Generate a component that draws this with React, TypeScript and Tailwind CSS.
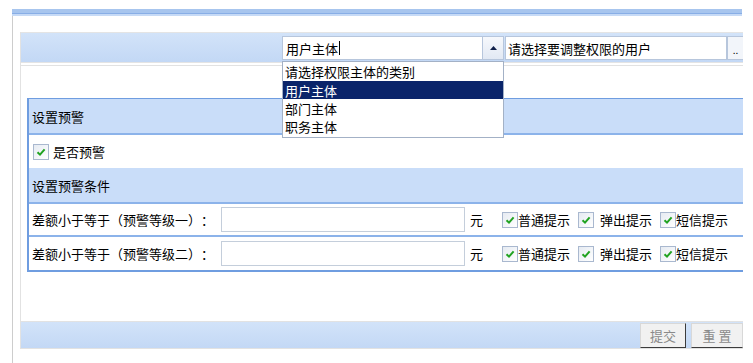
import React from 'react';

const Check: React.FC = () => (
  <span className="inline-flex h-[16px] w-[16px] shrink-0 items-center justify-center border border-[#a9b8cf] bg-gradient-to-br from-[#e6ebf2] to-white">
    <svg width="10" height="10" viewBox="0 0 10 10">
      <path d="M1.5 5.2 L4 7.6 L8.6 2.4" fill="none" stroke="#21a321" strokeWidth="2" />
    </svg>
  </span>
);

const SectionHead: React.FC<{ title: string }> = ({ title }) => (
  <div className="flex h-[36px] items-center border-b-2 border-[#8cb3ea] bg-[#c9ddf9] pl-[3px]">
    {title}
  </div>
);

const LevelRow: React.FC<{ label: string; last?: boolean }> = ({ label, last }) => (
  <div className={`flex h-[33px] items-center pl-[3px] ${last ? '' : 'border-b-2 border-[#8cb3ea]'}`}>
    <span className="w-[182px] whitespace-nowrap">{label}</span>
    <div className="ml-[7px] h-[25px] w-[244px] border border-[#c4cedb] bg-white" />
    <span className="ml-[5px]">元</span>
    <span className="ml-[19px]"><Check /></span>
    <span>普通提示</span>
    <span className="ml-[8px]"><Check /></span>
    <span className="ml-[6px]">弹出提示</span>
    <span className="ml-[8px]"><Check /></span>
    <span>短信提示</span>
  </div>
);

export default function App() {
  return (
    <div
      className="relative h-[363px] w-[753px] overflow-hidden bg-white text-[13px] leading-none text-black [text-spacing-trim:space-all]"
      style={{ fontFamily: '"Noto Sans CJK SC", "Liberation Sans", sans-serif' }}
    >
      {/* top strip */}
      <div className="ml-[12px] mt-[9px] w-[730px]">
        <div className="h-[4px] bg-[#a7c5ee]" />
        <div className="h-[1px] bg-[#88aee6]" />
        <div className="h-[2px] bg-[#c6daf6]" />
      </div>

      <div className="ml-[12px] h-[347px] w-[730px] border-l border-[#cdcdcd] pl-[7px] pt-[16px]">
        <div className="w-[723px] overflow-hidden border-l border-[#e2e2e2]">
          {/* header band */}
          <div className="flex h-[31px] items-start border-y border-[#e4e4e4] bg-gradient-to-b from-[#d2e3f9] to-[#c3d8f5] pl-[261px] pt-[3px]">
            <div className="flex h-[24px] w-[202px] items-center border border-[#b7c6dc] bg-white pl-[3px]">
              用户主体<span className="ml-[1px] h-[14px] w-[1px] bg-black" />
            </div>
            <div className="flex h-[24px] w-[21px] items-center justify-center border-y border-r border-[#b7c6dc] bg-gradient-to-b from-[#f6f8fc] to-[#e2e9f4]">
              <svg width="7" height="4" viewBox="0 0 7 4">
                <path d="M0 4 L3.5 0 L7 4 Z" fill="#10204a" />
              </svg>
            </div>
            <div className="ml-[1px] flex h-[24px] w-[223px] items-center border border-[#b7c6dc] bg-white pl-[2px]">
              请选择要调整权限的用户
            </div>
            <div className="flex h-[24px] w-[16px] items-end justify-center border-y border-l border-[#b7c6dc] bg-[#f2f5fa] pb-[4px] text-[10px]">
              ..
            </div>
          </div>
          <div className="mt-[2px] h-[1px] bg-[#e2e2e2]" />

          {/* content */}
          <div className="h-[255px] pl-[6px] pt-[32px]">
            <div className="w-[730px] border-l-2 border-t border-b-2 border-[#6f9de0]">
              <SectionHead title="设置预警" />
              <div className="flex h-[33px] items-center gap-[4px] pl-[4px]">
                <Check />
                <span>是否预警</span>
              </div>
              <SectionHead title="设置预警条件" />
              <LevelRow label="差额小于等于（预警等级一）：" />
              <LevelRow label="差额小于等于（预警等级二）：" last />
            </div>
          </div>

          {/* bottom bar */}
          <div className="flex h-[28px] items-center justify-end border-y border-[#e2e2e2] bg-gradient-to-b from-[#d2e3f9] to-[#c3d8f5]">
            <button className="flex h-[25px] w-[46px] items-center justify-center border border-[#d8d8d8] border-b-[#3c3c3c] border-r-[#3c3c3c] bg-[#f1f1f1] text-[#8a8a8a]">
              提交
            </button>
            <button className="ml-[5px] flex h-[25px] w-[52px] items-center justify-center border border-[#d8d8d8] border-b-[#3c3c3c] bg-[#f1f1f1] text-[#8a8a8a]">
              重&nbsp;置
            </button>
          </div>
        </div>
      </div>

      {/* dropdown list */}
      <div className="absolute left-[282px] top-[61px] w-[222px] border border-[#a3b1c6] bg-white pb-[2px]">
        <div className="flex h-[19px] items-center pl-[2px]">请选择权限主体的类别</div>
        <div className="flex h-[18px] items-center bg-[#0a246a] pl-[2px] text-white">用户主体</div>
        <div className="flex h-[18px] items-center pl-[2px]">部门主体</div>
        <div className="flex h-[18px] items-center pl-[2px]">职务主体</div>
      </div>
    </div>
  );
}
